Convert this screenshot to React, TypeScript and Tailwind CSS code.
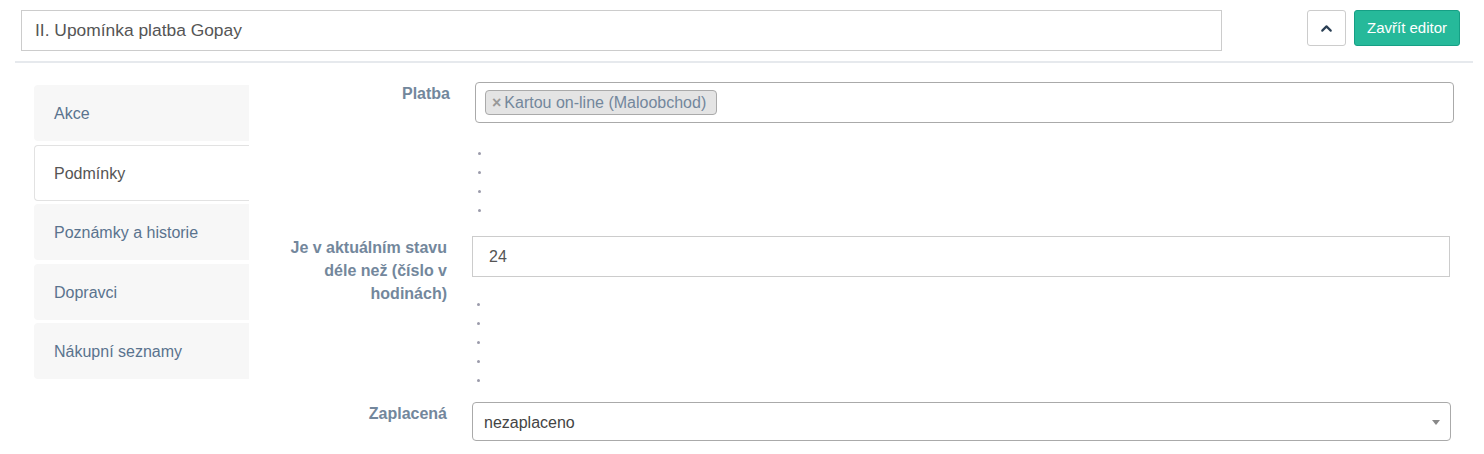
import { ChevronUp } from 'lucide-react'

const tabs = [
  { label: 'Akce', active: false },
  { label: 'Podmínky', active: true },
  { label: 'Poznámky a historie', active: false },
  { label: 'Dopravci', active: false },
  { label: 'Nákupní seznamy', active: false },
]

function Dots({ count, className }: { count: number; className?: string }) {
  return (
    <ul className={className}>
      {Array.from({ length: count }).map((_, i) => (
        <li key={i} className="flex h-[19px] items-center">
          <span className="block h-[3px] w-[3px] rounded-full bg-[#9b9bab]" />
        </li>
      ))}
    </ul>
  )
}

export default function App() {
  return (
    <div className="h-[454px] w-[1484px] overflow-hidden bg-white font-['Liberation_Sans',Arial,sans-serif] text-[#73879C]">
      <div className="flex items-start pl-[21px] pr-[24px] pt-[10px]">
        <div className="flex h-[41px] w-[1201px] items-center border border-[#ccc] px-[13px] text-[17.4px] text-[#555]">
          II. Upomínka platba Gopay
        </div>
        <div className="ml-auto flex gap-[8px]">
          <button
            type="button"
            className="flex h-[36px] w-[39px] items-center justify-center rounded-[3px] border border-[#ccc] bg-white text-[#2a3f54]"
          >
            <ChevronUp size={17} strokeWidth={3} />
          </button>
          <button
            type="button"
            className="h-[36px] w-[106px] rounded-[3px] border border-[#169f85] bg-[#26B99A] text-[15px] text-white"
          >
            Zavřít editor
          </button>
        </div>
      </div>

      <div className="ml-[15px] mr-[11px] mt-[10px] h-[2px] bg-[#E6E9ED]" />

      <div className="flex">
        <div className="ml-[34px] mt-[22px] flex w-[215px] flex-col gap-[3.5px]">
          {tabs.map((tab) => (
            <div
              key={tab.label}
              className={
                tab.active
                  ? 'flex h-[56px] items-center rounded-l-[4px] border border-r-0 border-[#e2e2e2] bg-white pl-[19px] pt-[2px] text-[16px] text-[#555]'
                  : 'flex h-[56px] items-center rounded-l-[4px] bg-[#F7F7F7] pl-[20px] pt-[2px] text-[16px] text-[#5A738E]'
              }
            >
              {tab.label}
            </div>
          ))}
        </div>

        <div className="ml-[28px] mt-[19px] flex flex-col">
          <div className="flex">
            <div className="w-[173px] text-right text-[16px] font-bold leading-[23px]">Platba</div>
            <div className="ml-[25px] flex flex-col">
              <div className="flex h-[41px] w-[979px] items-center rounded-[4px] border border-[#aaa] pl-[9px]">
                <span className="flex h-[25px] items-center rounded-[4px] border border-[#aaa] bg-[#e4e4e4] pl-[6px] pr-[10px] text-[16px] text-[#73879C]">
                  <span className="mr-[3px] text-[16px] font-black leading-none text-[#999]">×</span>
                  Kartou on-line (Maloobchod)
                </span>
              </div>
              <Dots count={4} className="ml-[3px] pb-[16.5px] pt-[20.5px]" />
            </div>
          </div>

          <div className="flex">
            <div className="w-[170px] text-right text-[16px] font-bold leading-[23px]">
              Je v aktuálním stavu déle než (číslo v hodinách)
            </div>
            <div className="ml-[25px] flex flex-col">
              <div className="flex h-[41px] w-[978px] items-center border border-[#ccc] pl-[16px] text-[16px] text-[#555]">
                24
              </div>
              <Dots count={5} className="ml-[5px] pb-[12.5px] pt-[17.5px]" />
            </div>
          </div>

          <div className="flex">
            <div className="w-[170px] text-right text-[16px] font-bold leading-[23px]">Zaplacená</div>
            <div className="ml-[25px] flex h-[39px] w-[979px] items-center justify-between rounded-[4px] border border-[#aaa] pl-[11px] pr-[10px] pt-[2px] text-[16px] text-[#444]">
              nezaplaceno
              <span className="h-0 w-0 border-x-[4.5px] border-t-[5px] border-x-transparent border-t-[#888]" />
            </div>
          </div>
        </div>
      </div>
    </div>
  )
}
